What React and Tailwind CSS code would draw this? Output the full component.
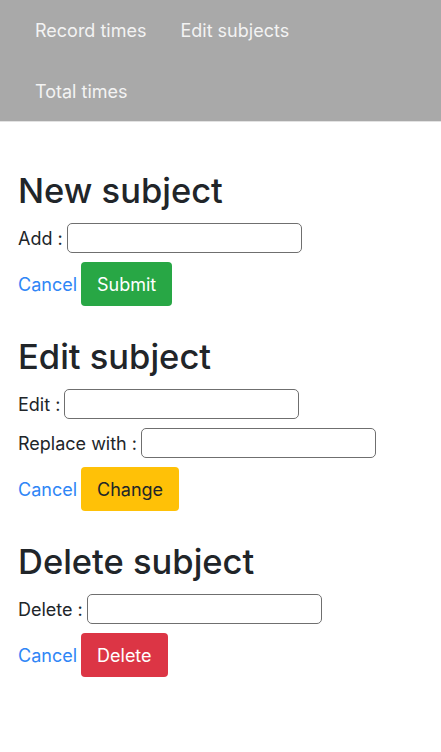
const font = { fontFamily: "Inter, 'Noto Sans', sans-serif" };

const Field = ({ label }) => (
  <div className="flex items-center h-[30px] gap-[4px]">
    <span className="text-[18px] text-[#212529]">{label}</span>
    <input
      type="text"
      className="w-[235px] h-[30px] rounded-[5px] border-[1.5px] border-[#6f6f6f] bg-white"
    />
  </div>
);

const Actions = ({ label, className }) => (
  <div className="flex items-center gap-[4px]">
    <a href="#" className="text-[18px] text-[#2f86f6]">Cancel</a>
    <button className={"h-[44px] px-[16px] rounded-[4px] text-[18px] " + className}>
      {label}
    </button>
  </div>
);

const Section = ({ title, children }) => (
  <section className="flex flex-col">
    <h2 className="text-[34.5px] leading-[41px] font-medium text-[#212529] mb-[12px]">{title}</h2>
    <div className="flex flex-col gap-[9px]">{children}</div>
  </section>
);

const App = () => {
  return (
    <div className="min-h-screen bg-white" style={font}>
      <nav className="h-[121px] bg-[#a9a9a9] border-b border-[#e2e2e2] box-content px-[35px] flex flex-wrap content-start gap-x-[34px]">
        <a href="#" className="h-[61px] flex items-center text-[18px] text-[#f3f3f3]">Record times</a>
        <a href="#" className="h-[61px] flex items-center text-[18px] text-[#f3f3f3]">Edit subjects</a>
        <a href="#" className="h-[61px] flex items-center text-[18px] text-[#f3f3f3]">Total times</a>
      </nav>
      <main className="px-[18px] pt-[48px] flex flex-col gap-[30px]">
        <Section title="New subject">
          <Field label="Add :" />
          <Actions label="Submit" className="bg-[#28a745] text-white" />
        </Section>
        <Section title="Edit subject">
          <Field label="Edit :" />
          <Field label="Replace with :" />
          <Actions label="Change" className="bg-[#ffc107] text-[#212529]" />
        </Section>
        <Section title="Delete subject">
          <Field label="Delete :" />
          <Actions label="Delete" className="bg-[#dc3545] text-white" />
        </Section>
      </main>
    </div>
  );
};

export default App;
